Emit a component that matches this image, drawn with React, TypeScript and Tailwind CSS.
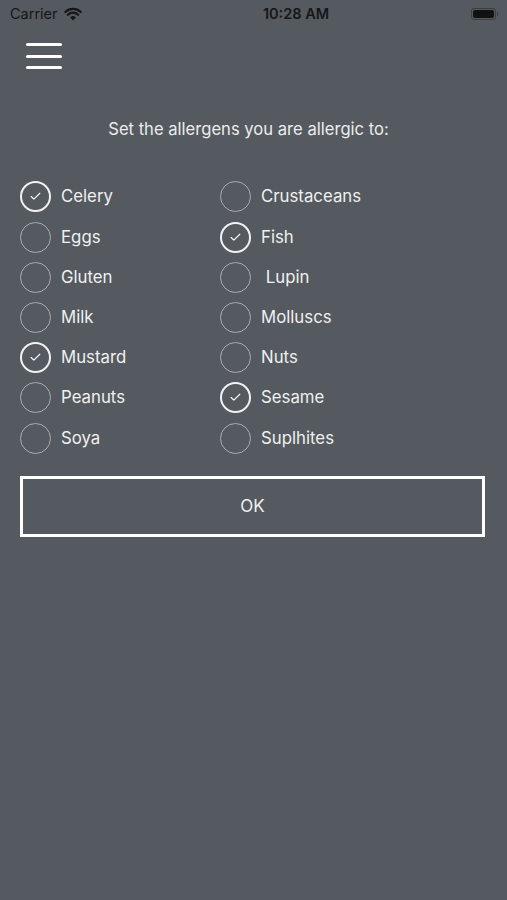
import { Check } from "lucide-react";

const left = [
  { name: "Celery", on: true },
  { name: "Eggs", on: false },
  { name: "Gluten", on: false },
  { name: "Milk", on: false },
  { name: "Mustard", on: true },
  { name: "Peanuts", on: false },
  { name: "Soya", on: false },
];

const right = [
  { name: "Crustaceans", on: false },
  { name: "Fish", on: true },
  { name: " Lupin", on: false },
  { name: "Molluscs", on: false },
  { name: "Nuts", on: false },
  { name: "Sesame", on: true },
  { name: "Suplhites", on: false },
];

function Item({ name, on }: { name: string; on: boolean }) {
  return (
    <div className="flex h-[40.2px] items-center gap-[10px]">
      <div
        className={`flex h-[31px] w-[31px] items-center justify-center rounded-full ${
          on ? "border-2 border-[#f2f2f2]" : "border-[1.5px] border-[#a9adb1]"
        }`}
      >
        {on && <Check className="h-[13px] w-[13px] text-white" strokeWidth={2} />}
      </div>
      <span className="whitespace-pre text-[16.8px] text-[#f0f0f0]">{name}</span>
    </div>
  );
}

export default function App() {
  return (
    <div className="min-h-[900px] bg-[#545a60] font-['Inter',sans-serif]">
      {/* status bar */}
      <div className="flex h-[28px] items-center justify-between pl-[10px] pr-[9px] text-[#161616]">
        <div className="flex items-center gap-[6px]">
          <span className="text-[14.5px]">Carrier</span>
          <svg width="18" height="14" viewBox="0 0 18 14">
            <path d="M9 13.5 L6.2 10.4 A4 4 0 0 1 11.8 10.4 Z" fill="#161616" />
            <path d="M3.8 7.8 A7.5 7.5 0 0 1 14.2 7.8" stroke="#161616" strokeWidth="2.2" fill="none" strokeLinecap="round" />
            <path d="M1.3 5 A11 11 0 0 1 16.7 5" stroke="#161616" strokeWidth="2.2" fill="none" strokeLinecap="round" />
          </svg>
        </div>
        <span className="ml-[40px] text-[14.5px] font-semibold">10:28 AM</span>
        <div className="flex items-center gap-[1px]">
          <div className="h-[12px] w-[25px] rounded-[3px] border border-[#3a3d40] p-[1px]">
            <div className="h-full w-full rounded-[2px] bg-[#111]" />
          </div>
          <div className="h-[4px] w-[1.5px] rounded-r bg-[#3a3d40]" />
        </div>
      </div>

      {/* menu */}
      <div className="flex flex-col gap-[8.5px] px-[26px] pt-[15px]">
        <div className="h-[3px] w-[36px] rounded-full bg-white" />
        <div className="h-[3px] w-[36px] rounded-full bg-white" />
        <div className="h-[3px] w-[36px] rounded-full bg-white" />
      </div>

      <p className="mt-[48px] pr-[10px] text-center text-[16.6px] text-[#ececec]">
        Set the allergens you are allergic to:
      </p>

      <div className="mt-[35px] grid grid-cols-[200px_200px] px-[20px]">
        <div className="flex flex-col">
          {left.map((a) => (
            <Item key={a.name} name={a.name} on={a.on} />
          ))}
        </div>
        <div className="flex flex-col">
          {right.map((a) => (
            <Item key={a.name} name={a.name} on={a.on} />
          ))}
        </div>
      </div>

      <div className="px-[20px] pt-[18px]">
        <button className="flex h-[61px] w-[465px] items-center justify-center border-[3px] border-white text-[17px] text-[#f0f0f0]">
          OK
        </button>
      </div>
    </div>
  );
}
